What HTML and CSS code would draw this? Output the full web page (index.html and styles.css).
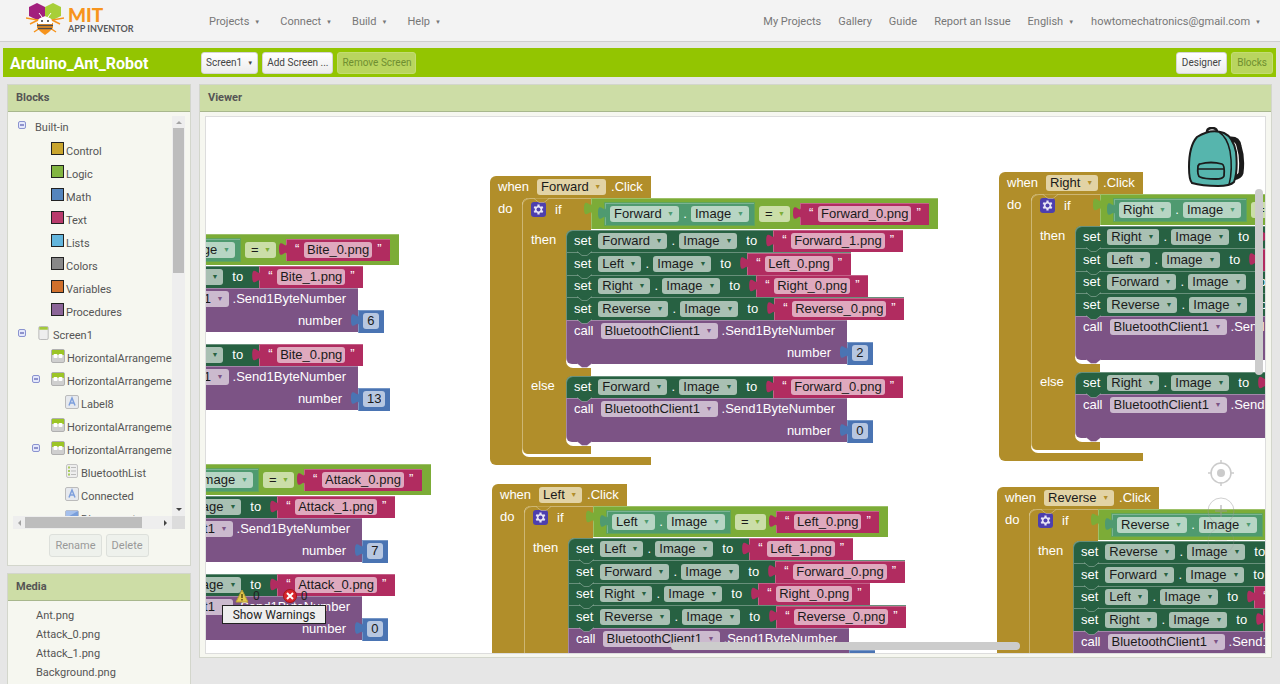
FILE: index.html
```html
<!DOCTYPE html>
<html lang="en">
<head>
<meta charset="utf-8">
<title>MIT App Inventor</title>
<link rel="stylesheet" href="styles.css">
</head>
<body>
<svg class="defs" aria-hidden="true">
  <symbol id="i-minus" viewBox="0 0 8 8"><rect x=".5" y=".5" width="7" height="7" rx="1.5" fill="#e4e8fb" stroke="#8a93cf"/><path d="M2 4h4" stroke="#3a3f9e"/></symbol>
  <symbol id="i-screen" viewBox="0 0 12 15"><rect x=".5" y=".5" width="10" height="14" rx="1.5" fill="#eee" stroke="#b5b5b5"/><path d="M1 1h9v3H1z" fill="#a3c93a"/></symbol>
  <symbol id="i-harr" viewBox="0 0 14 14"><rect x=".5" y=".5" width="13" height="13" rx="1.5" fill="#cfcfcf" stroke="#b0b0b0"/><path d="M1 1h12v5H1z" fill="#9cc527"/><rect x="2.500" y="5" width="4" height="4" rx="1" fill="#fff"/><rect x="7.500" y="5" width="4" height="4" rx="1" fill="#fff"/></symbol>
  <symbol id="i-label" viewBox="0 0 14 14"><rect x=".5" y=".5" width="13" height="13" rx="1.500" fill="#e6e9ee" stroke="#bbb"/><path d="M4 10.500L7 3l3 7.500M5 8h4" fill="none" stroke="#7d9fdc" stroke-width="1.500"/></symbol>
  <symbol id="i-list" viewBox="0 0 14 14"><rect x="1.500" y=".5" width="11" height="13" rx="1.500" fill="#eee" stroke="#c4c4c4"/><path d="M6 3.500h5M6 7h5M6 10.500h5" stroke="#bbb"/><path d="M3 3.500h2M3 7h2M3 10.500h2" stroke="#a9cc5b" stroke-width="2"/></symbol>
  <symbol id="i-button" viewBox="0 0 14 14"><rect x=".5" y=".5" width="13" height="13" rx="1.500" fill="#7a9fdb" stroke="#b5bccb"/><path d="M1 1h12L1 8z" fill="#a5c0ec"/></symbol>
</svg>

<header class="top">
  <a class="logo" href="#" aria-label="MIT App Inventor">
    <svg class="bee" viewBox="0 0 38 32" aria-hidden="true">
      <path d="M3 4l8-4 8 4v9l-8 4-8-4z" fill="#a21f7d"/>
      <path d="M19 4l8-4 8 4v9l-8 4-8-4z" fill="#a8cf38"/>
      <path d="M0 15l12 2-8 4M38 15l-12 2 8 4M8 29l6-4M30 29l-6-4" fill="none" stroke="#f7941d" stroke-width="1.500"/>
      <path d="M11 20h16v5l-4 4-4 3-4-3-4-4z" fill="#f7941d"/>
      <path d="M12 19q0-5 7-5t7 5v2H12z" fill="#fff"/>
      <path d="M11 22.500h16M12 25.500h14" stroke="#4d4d4f" stroke-width="1.500"/>
      <path d="M16 14l-3-4M22 14l3-4" stroke="#fff"/>
      <circle cx="16" cy="18" r="1" fill="#333"/><circle cx="22" cy="18" r="1" fill="#333"/>
    </svg>
    <span class="wordmark"><b>MIT</b><span>APP INVENTOR</span></span>
  </a>
  <nav class="menus">
    <button class="menu">Projects<i>▼</i></button>
    <button class="menu">Connect<i>▼</i></button>
    <button class="menu">Build<i>▼</i></button>
    <button class="menu">Help<i>▼</i></button>
  </nav>
  <nav class="links">
    <a href="#">My Projects</a>
    <a href="#">Gallery</a>
    <a href="#">Guide</a>
    <a href="#">Report an Issue</a>
    <button class="menu">English<i>▼</i></button>
    <button class="menu">howtomechatronics@gmail.com<i>▼</i></button>
  </nav>
</header>

<div class="projectbar">
  <h1>Arduino_Ant_Robot</h1>
  <div class="screens">
    <button class="btn">Screen1<i>▼</i></button>
    <button class="btn">Add Screen ...</button>
    <button class="btn" disabled>Remove Screen</button>
  </div>
  <div class="modes">
    <button class="btn">Designer</button>
    <button class="btn" disabled>Blocks</button>
  </div>
</div>

<main class="work">
  <div class="side">
    <section class="panel">
      <h2>Blocks</h2>
      <div class="treebox">
        <ul class="tree">
          <li class="l0"><svg class="exp"><use href="#i-minus"/></svg><span>Built-in</span></li>
          <li class="l2"><b class="sw control"></b><span>Control</span></li>
          <li class="l2"><b class="sw logic"></b><span>Logic</span></li>
          <li class="l2"><b class="sw math"></b><span>Math</span></li>
          <li class="l2"><b class="sw text"></b><span>Text</span></li>
          <li class="l2"><b class="sw lists"></b><span>Lists</span></li>
          <li class="l2"><b class="sw colors"></b><span>Colors</span></li>
          <li class="l2"><b class="sw vars"></b><span>Variables</span></li>
          <li class="l2"><b class="sw procs"></b><span>Procedures</span></li>
          <li class="l0 screen"><svg class="exp"><use href="#i-minus"/></svg><svg class="ic"><use href="#i-screen"/></svg><span>Screen1</span></li>
          <li class="l2"><svg class="ic"><use href="#i-harr"/></svg><span>HorizontalArrangement1</span></li>
          <li class="l1"><svg class="exp"><use href="#i-minus"/></svg><svg class="ic"><use href="#i-harr"/></svg><span>HorizontalArrangement2</span></li>
          <li class="l3"><svg class="ic"><use href="#i-label"/></svg><span>Label8</span></li>
          <li class="l2"><svg class="ic"><use href="#i-harr"/></svg><span>HorizontalArrangement3</span></li>
          <li class="l1"><svg class="exp"><use href="#i-minus"/></svg><svg class="ic"><use href="#i-harr"/></svg><span>HorizontalArrangement4</span></li>
          <li class="l3"><svg class="ic"><use href="#i-list"/></svg><span>BluetoothList</span></li>
          <li class="l3"><svg class="ic"><use href="#i-label"/></svg><span>Connected</span></li>
          <li class="l3"><svg class="ic"><use href="#i-button"/></svg><span>Disconnect</span></li>
        </ul>
        <div class="vbar">
          <svg viewBox="0 0 12 12"><path d="M3 8l3-3 3 3z" fill="#a3a3a3"/></svg>
          <div class="thumb"></div>
          <svg viewBox="0 0 12 12"><path d="M3 4l3 3 3-3z" fill="#444"/></svg>
        </div>
        <div class="hbar">
          <svg viewBox="0 0 12 12"><path d="M8 3L5 6l3 3z" fill="#a3a3a3"/></svg>
          <div class="thumb"></div>
          <svg viewBox="0 0 12 12"><path d="M4 3l3 3-3 3z" fill="#444"/></svg>
        </div>
        <div class="corner"></div>
      </div>
      <div class="actions">
        <button class="btn" disabled>Rename</button>
        <button class="btn" disabled>Delete</button>
      </div>
    </section>
    <section class="panel media">
      <h2>Media</h2>
      <ul>
        <li><a href="#">Ant.png</a></li>
        <li><a href="#">Attack_0.png</a></li>
        <li><a href="#">Attack_1.png</a></li>
        <li><a href="#">Background.png</a></li>
      </ul>
    </section>
  </div>

  <section class="panel viewer">
    <h2>Viewer</h2>
    <div class="canvas">
      <div id="blocks"></div>
      <svg class="backpack" viewBox="0 0 58 60" aria-hidden="true">
        <path d="M42 12q9-1 10 7 4 12 2 27-1 4-8 5" fill="none" stroke="#1b1b1b" stroke-width="5"/>
        <path d="M20 5q0-4 5-4t5 4" fill="none" stroke="#1b1b1b" stroke-width="2.500"/>
        <path d="M10 10Q24 1 37 6q9 4 12 19 2 19-2 30-4 4-16 4-16 0-26-3-3-3-3-16Q2 19 10 10z" fill="#56b5ad" stroke="#1b1b1b" stroke-width="2"/>
        <path d="M32 5q8 5 11 19 3 18-1 34" fill="none" stroke="#1b1b1b" stroke-width="1.500"/>
        <path d="M13 37q11-3 22 0 3 1 2 12-1 3-8 3-12 0-16-2-3-1-2-11 1-2 2-2z" fill="#56b5ad" stroke="#1b1b1b" stroke-width="1.800"/>
        <path d="M11 42h26" stroke="#1b1b1b" stroke-width="1.500"/>
      </svg>
      <svg class="zoomer" viewBox="0 0 30 96" fill="none" stroke="#999" aria-hidden="true">
        <g opacity=".5" stroke-width="1.500"><circle cx="15" cy="14" r="10"/><circle cx="15" cy="14" r="4" fill="#999" stroke="none"/><path d="M15 1v4M15 23v4M2 14h4M24 14h4"/></g>
        <g opacity=".45"><circle cx="15" cy="52" r="13"/><path d="M15 46v12M9 52h12" stroke-width="2"/></g>
        <g opacity=".25"><circle cx="15" cy="82" r="13"/><path d="M9 82h12"/></g>
      </svg>
      <div class="warnings">
        <div class="counts">
          <svg viewBox="0 0 14 14" aria-hidden="true"><path d="M7 1l6 12H1z" fill="#e2c94c" stroke="#b99f35"/><path d="M7 5v4M7 10v1.500" stroke="#5a4c10" stroke-width="1.500"/></svg><span>0</span>
          <svg viewBox="0 0 14 14" aria-hidden="true"><circle cx="7" cy="7" r="6.500" fill="#d8262c" stroke="#a5151b"/><path d="M4 4l6 6M10 4l-6 6" stroke="#fff" stroke-width="2"/></svg><span>0</span>
        </div>
        <button>Show Warnings</button>
      </div>
      <div class="scroll-v"></div>
      <div class="scroll-h"></div>
    </div>
  </section>
</main>
<script src="blocks.js"></script>
</body>
</html>
```
FILE: styles.css
```css
* { box-sizing: border-box; }
html, body { margin: 0; height: 100%; }
body {
  display: flex;
  flex-direction: column;
  overflow: hidden;
  background: #e6e6e6;
  color: #555;
  font: 11px/16px Roboto, "Liberation Sans", sans-serif;
}
button, input, select { font: inherit; color: inherit; margin: 0; }
button { cursor: pointer; }
a { color: inherit; text-decoration: none; }
ul { list-style: none; margin: 0; padding: 0; }
h1, h2 { margin: 0; }
i { font-style: normal; font-size: 6px; margin-left: 5px; }
.defs { position: absolute; width: 0; height: 0; }

.top {
  flex: none;
  display: flex;
  align-items: center;
  height: 42px;
  padding: 0 19px 0 26px;
  background: #f3f3f3;
  border-bottom: 1px solid #cfcfcf;
  color: #777;
}
.logo { display: flex; align-items: center; width: 183px; gap: 4px; }
.bee { width: 38px; height: 32px; margin-bottom: 4px; }
.wordmark { display: flex; flex-direction: column; font-family: Lato, sans-serif; }
.wordmark b { color: #f7941d; font-size: 19px; line-height: 16px; font-weight: 900; }
.wordmark span { color: #58595b; font-size: 9px; line-height: 11px; font-weight: 700; }
.menus { display: flex; gap: 20px; padding-top: 2px; }
.links { display: flex; gap: 17px; margin-left: auto; padding-top: 2px; }
.menu { display: flex; align-items: center; padding: 0; border: 0; background: none; line-height: 16px; }

.projectbar {
  flex: none;
  display: flex;
  align-items: center;
  height: 29px;
  margin: 6px 4px 0 3px;
  padding: 0 3px 0 7px;
  background: #93c501;
}
.projectbar h1 { width: 191px; color: #fff; font-size: 16px; line-height: 20px; font-weight: 700; padding-top: 3px; }
.screens, .modes { display: flex; gap: 4px; }
.modes { margin-left: auto; }
.btn {
  display: flex;
  align-items: center;
  height: 22px;
  padding: 0 5px;
  border: 1px solid #d5d5d5;
  border-radius: 3px;
  background: linear-gradient(#fff, #ececec);
  color: #444;
  font-size: 10px;
}
.screens .btn { padding: 0 4px; }
.projectbar .btn:disabled { background: #b9d55f; border-color: #c3dc73; color: #6f8f30; }

.work { flex: 1; min-height: 0; display: flex; gap: 8px; padding: 7px 8px 0 7px; }
.side { flex: none; width: 184px; display: flex; flex-direction: column; gap: 7px; }
.panel { background: #f6f7f0; border: 1px solid #d3d6cc; display: flex; flex-direction: column; }
.panel h2 {
  height: 27px;
  padding: 0 8px;
  background: #cddda6;
  border-bottom: 1px solid #a8b78d;
  font-size: 11px;
  line-height: 26px;
  font-weight: 700;
  color: #555;
}
.side .panel { flex: none; }

.treebox {
  display: grid;
  grid-template: 400px 13px / 1fr 13px;
  margin: 4px 5px 0;
}
.tree { overflow: hidden; }
.tree li { display: flex; align-items: center; height: 23px; white-space: nowrap; }
.tree li:first-child { height: 24px; padding-bottom: 2px; }
.tree span { flex: none; line-height: 16px; padding-top: 1px; }
.tree .exp { flex: none; width: 8px; height: 8px; margin-bottom: 5px; }
.tree .ic { flex: none; width: 14px; height: 14px; margin: 0 2px 6px 0; }
.l0 { padding-left: 5px; gap: 9px; }
.l1 { padding-left: 19px; }
.l1 .exp { margin-right: 11px; }
.l2 { padding-left: 38px; }
.l3 { padding-left: 52px; }
.tree .screen { gap: 0; }
.screen .exp { margin-right: 11px; }
.sw { flex: none; width: 13px; height: 13px; margin: 0 2px 6px 0; border: 1px solid #222; }
.control { background: #c9a52e; } .logic { background: #82b541; } .math { background: #5585bd; }
.text { background: #b93b6c; } .lists { background: #62b5dc; } .colors { background: #888; }
.vars { background: #d0702c; } .procs { background: #8b6598; }
.vbar, .hbar { display: flex; align-items: center; background: #eee; }
.vbar { flex-direction: column; }
.vbar svg, .hbar svg { flex: none; width: 12px; height: 12px; }
.vbar .thumb { width: 11px; height: 145px; background: #bdbdbd; margin-bottom: auto; }
.hbar .thumb { width: 117px; height: 11px; background: #bdbdbd; margin-right: auto; }
.corner { background: #dcdcdc; }
.actions { display: flex; justify-content: center; gap: 4px; padding: 5px 0 8px; }
.actions .btn { height: 23px; font-size: 11px; background: #eef1ec; border-color: #dde0db; color: #999; }
.media { min-height: 140px; }
.media ul { padding: 5px 28px; line-height: 19px; }

.viewer { flex: 1; min-width: 0; margin-bottom: 26px; padding-bottom: 3px; border-color: #d3d6cc; }
.canvas {
  flex: 1;
  position: relative;
  overflow: hidden;
  margin: 4px 5px 0;
  border: 1px solid #ddd;
  background: #fff;
  font: 13px/18px "Liberation Sans", Arial, sans-serif;
  color: #fff;
}
.backpack { position: absolute; right: 20px; top: 10px; width: 58px; height: 60px; }
.zoomer { position: absolute; right: 29px; bottom: 98px; width: 30px; height: 96px; }
.scroll-v, .scroll-h { position: absolute; background: #ccc; border-radius: 4px; }
.scroll-v { right: 2px; top: 72px; width: 8px; height: 186px; }
.scroll-h { bottom: 3px; left: 465px; width: 349px; height: 8px; }
.warnings { position: absolute; left: 16px; bottom: 29px; color: #222; font: 12px/14px Roboto, sans-serif; }
.counts { display: flex; align-items: center; padding: 0 13px; height: 18px; }
.counts svg { width: 14px; height: 14px; margin-right: 4px; }
.counts span { margin-right: 23px; }
.counts span:last-child { margin-right: 0; }
.warnings button { display: block; width: 104px; height: 19px; padding: 0; border: 1px solid #222; background: #eee; }

/* block stacks */
.event { position: absolute; display: flex; flex-direction: column; width: max-content; --c: #b18e2a; --f: #e2d3a5; }
.hat, .foot, .do { background: #b18e2a; }
.hat { display: flex; align-items: center; gap: 8px; height: 22px; padding: 0 8px; border-radius: 6px 0 0 0; }
.hat .dot { margin-left: -3px; }
.foot { height: 8px; border-radius: 0 0 0 6px; }
.body { display: flex; width: 0; min-width: 100%; background: linear-gradient(#b18e2a, #b18e2a) 0 0 / 60px 100% no-repeat; }
.do { flex: none; width: 32px; padding: 2px 0 0 8px; }
.inner { flex: none; padding-bottom: 3px; background: #fff; border-radius: 7px 0 0 7px; }
.ifblock { position: relative; border-left: 1px solid #cdb673; border-radius: 7px 0 0 6px; background: linear-gradient(#b18e2a, #b18e2a) 0 0 / 60px 100% no-repeat; }
.ifhead { display: flex; height: 32px; }
.iflabel { position: relative; flex: none; width: 68px; display: flex; gap: 9px; padding: 2px 0 0 8px; background: #b18e2a; border-top: 1px solid #cdb673; border-radius: 7px 0 0 0; }
.gear { width: 15px; height: 15px; margin-top: 1px; }
.branch { display: flex; }
.branch > span { flex: none; width: 43px; padding: 1px 0 0 8px; }
.stack { background: #fff; border-radius: 7px 0 0 7px; padding: 0 0 4px; }
.arm { width: 68px; height: 8px; background: #b18e2a; }
.arm:last-child { border-radius: 0 0 0 6px; }
.row, .call { position: relative; box-shadow: inset 1px 1px rgba(255, 255, 255, .3); }
.row { width: max-content; display: flex; align-items: center; height: 22px; padding-left: 8px; background: #276142; --c: #276142; --f: #a9c0b3; }
.row:nth-child(even) { height: 23px; }
.stack > :first-child { border-top-left-radius: 6px; }
.word { margin-right: 7px; }
.sep { width: 12px; text-align: center; }
.row .to { margin: 0 16px 0 9px; }
.call { width: max-content; height: 44px; padding-left: 8px; background: #7c5385; --c: #7c5385; --f: #cbbace; border-radius: 0 0 0 6px; }
.line { display: flex; align-items: center; height: 22px; }
.line .dot { margin: 0 12px 0 4px; }
.line.arg { justify-content: flex-end; }
.arg .name { margin-right: 16px; }
.arg .value { width: 0; }

.plug { position: relative; flex: none; display: flex; align-items: center; height: 22px; background: var(--c); box-shadow: inset 1px 1px rgba(255, 255, 255, .25); }
.plug::before {
  content: "";
  position: absolute;
  left: -7px;
  top: 4px;
  width: 8px;
  height: 13px;
  background: var(--c);
  clip-path: path("M8 0c0 9 -8 -7 -8 6.500s8 -2 8 6.500z");
}
.string { --c: #b12c60; --f: #dfa9be; padding: 0 9px; gap: 5px; }
.string q { quotes: none; width: 4px; height: 16px; line-height: 14px; }
.logicb { --c: #7cac37; height: 31px; padding: 0 9px 0 14px; }
.getter { --c: #4f9a70; --f: #b7d5c4; padding: 0 5px; outline: 1px solid #5fa55a; }
.logicb .op { --c: #7cac37; --f: #cbdea8; margin: 0 10px 0 5px; }
.number { --c: #4a74b3; --f: #b7c7e1; padding: 0 5px; width: max-content; height: 23px; }
.number .field { min-width: 16px; text-align: center; padding: 0 4px; }
.dd { position: relative; display: flex; flex: none; }
.dd select { appearance: none; height: 16px; line-height: 16px; padding: 0 17px 0 4px; border: 0; border-radius: 3px; background: var(--f); color: #1a1a1a; }
.dd.op select { padding-left: 6px; }
.dd::after { content: "▼"; position: absolute; right: 5px; top: 0; font-size: 7px; line-height: 15px; color: var(--c); pointer-events: none; }
.field { flex: none; field-sizing: content; height: 16px; line-height: 16px; padding: 0 3px; border: 0; border-radius: 3px; background: var(--f); color: #1a1a1a; }
.notch { position: absolute; left: 11px; bottom: -4px; width: 15px; height: 5px; z-index: 1; fill: var(--c); stroke: rgba(255, 255, 255, .3); }
.iflabel .notch { top: -1px; }

/* events scrolled past the left edge keep only their visible half */
.cut .hat, .cut .do, .cut .iflabel, .cut .branch > span, .cut .word,
.cut .getter .dd:first-child, .cut .word + .dd.own { visibility: hidden; }
```
FILE: blocks.js
```js
const notch = () =>
  `<svg class="notch" viewBox="0 0 15 5"><path d="M0 .5l5 4h5l5-4"/></svg>`;
const dd = (v, cls = '') =>
  `<span class="dd ${cls}"><select aria-label="${v}"><option>${v}</option></select></span>`;
const str = v =>
  `<span class="plug string"><q>“</q><input class="field" value="${v}" aria-label="text"><q>”</q></span>`;
const num = v =>
  `<span class="plug number"><input class="field" value="${v}" aria-label="number"></span>`;
const set = (c, v) =>
  `<div class="row"><span class="word">set</span>${dd(c, 'own')}<span class="sep">.</span>${dd('Image')}<span class="to">to</span>${str(v)}${notch()}</div>`;
const call = n =>
  `<div class="call"><div class="line"><span class="word">call</span>${dd('BluetoothClient1')}<span class="dot">.Send1ByteNumber</span></div>
   <div class="line arg"><span class="name">number</span><span class="value">${num(n)}</span></div>${notch()}</div>`;
const gear =
  `<svg class="gear" viewBox="0 0 15 15"><rect width="15" height="15" rx="3" fill="#4d3fae"/><path d="M7.500 2.500v10M3.200 5l8.600 5M3.200 10l8.600-5" stroke="#e8e6f6" stroke-width="2.200"/><circle cx="7.500" cy="7.500" r="3.600" fill="#e8e6f6"/><circle cx="7.500" cy="7.500" r="2" fill="#4d3fae"/></svg>`;

const event = e => `<div class="event${e.x < 0 ? ' cut' : ''}" style="left:${e.x}px;top:${e.y}px">
  <div class="hat"><span>when</span>${dd(e.name)}<span class="dot">.Click</span></div>
  <div class="body"><div class="do">do</div><div class="inner"><div class="ifblock">
    <div class="ifhead">
      <div class="iflabel">${gear}<span>if</span>${notch()}</div>
      <div class="plug logicb"><span class="plug getter">${dd(e.name)}<span class="sep">.</span>${dd('Image')}</span>${dd('=', 'op')}${str(e.name + '_0.png')}</div>
    </div>
    <div class="branch"><span>then</span><div class="stack">${set(e.name, e.name + '_1.png')}${e.others.map(o => set(o, o + '_0.png')).join('')}${call(e.on)}</div></div>
    <div class="arm"></div>
    <div class="branch"><span>else</span><div class="stack">${set(e.name, e.name + '_0.png')}${call(e.off)}</div></div>
    <div class="arm"></div>
  </div></div></div>
  <div class="foot"></div>
</div>`;

const events = [
  { name: 'Bite', x: -205, y: 95, others: [], on: 6, off: 13 },
  { name: 'Attack', x: -201, y: 325, others: [], on: 7, off: 0 },
  { name: 'Forward', x: 284, y: 59, others: ['Left', 'Right', 'Reverse'], on: 2, off: 0 },
  { name: 'Left', x: 286, y: 367, others: ['Forward', 'Right', 'Reverse'], on: 3, off: 0 },
  { name: 'Right', x: 793, y: 55, others: ['Left', 'Forward', 'Reverse'], on: 4, off: 0 },
  { name: 'Reverse', x: 791, y: 370, others: ['Forward', 'Left', 'Right'], on: 5, off: 0 }
];
document.getElementById('blocks').innerHTML = events.map(event).join('');
```
